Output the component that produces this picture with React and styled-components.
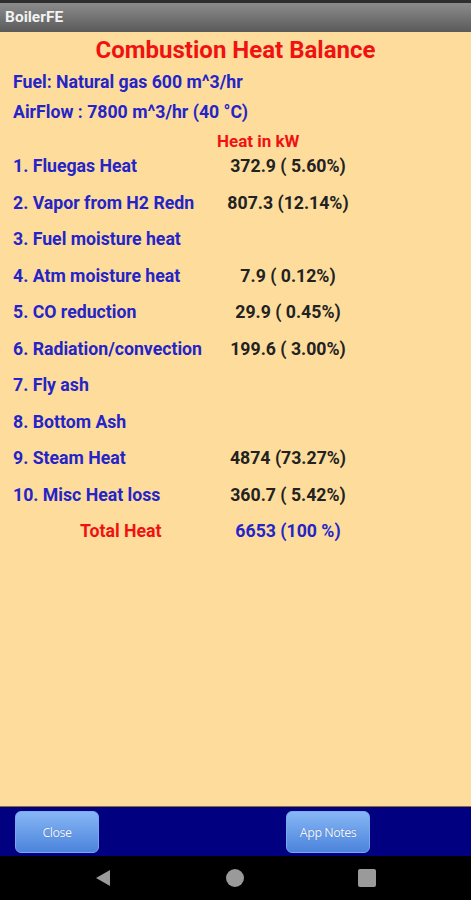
import React from "react";
import styled, { createGlobalStyle } from "styled-components";

const GlobalStyle = createGlobalStyle`
  html, body {
    margin: 0;
    padding: 0;
    background: #000;
  }
  body {
    font-family: Roboto, "Liberation Sans", sans-serif;
  }
`;

const rows = [
  { label: "1. Fluegas Heat", value: "372.9 ( 5.60%)" },
  { label: "2. Vapor from H2 Redn", value: "807.3 (12.14%)" },
  { label: "3. Fuel moisture heat", value: "" },
  { label: "4. Atm moisture heat", value: "7.9 ( 0.12%)" },
  { label: "5. CO reduction", value: "29.9 ( 0.45%)" },
  { label: "6. Radiation/convection", value: "199.6 ( 3.00%)" },
  { label: "7. Fly ash", value: "" },
  { label: "8. Bottom Ash", value: "" },
  { label: "9. Steam Heat", value: "4874 (73.27%)" },
  { label: "10. Misc Heat loss", value: "360.7 ( 5.42%)" },
];

const Screen = styled.div`
  height: 100vh;
  display: flex;
  flex-direction: column;
  overflow: hidden;
`;

const TitleBar = styled.div`
  height: 29px;
  border-top: 3px solid #2e2e2e;
  background: linear-gradient(#8c8c8c, #5a5a5a);
  color: #f2f2f2;
  font-weight: bold;
  font-size: 15.5px;
  line-height: 29px;
  padding-left: 5px;
`;

const Content = styled.div`
  flex: 1;
  background: #fedd9c;
  padding: 5px 0 0 13px;
  border-bottom: 1px solid #8a6a3a;
`;

const Heading = styled.div`
  color: #f01212;
  font-weight: bold;
  font-size: 24px;
  line-height: 26px;
  text-align: center;
  padding-right: 13px;
  margin-bottom: 4px;
`;

const InfoLine = styled.div`
  color: #2424c8;
  font-weight: bold;
  font-size: 17.7px;
  line-height: 30px;
`;

const Table = styled.div`
  display: grid;
  grid-template-columns: 200px 150px;
  grid-auto-rows: 36.5px;
  align-items: center;
`;

const HeadRow = styled.div`
  display: grid;
  grid-template-columns: 200px 150px;
`;

const ColumnHead = styled.div`
  grid-column: 2;
  color: #f01212;
  font-weight: bold;
  font-size: 17px;
  line-height: 14px;
  margin: 7px 0 0 4px;
  white-space: nowrap;
`;

const Label = styled.div`
  color: ${(p) => (p.$total ? "#f01212" : "#2424c8")};
  font-weight: bold;
  font-size: 17.7px;
  padding-left: ${(p) => (p.$total ? "67px" : "0")};
  white-space: nowrap;
`;

const Value = styled.div`
  color: ${(p) => (p.$total ? "#2424c8" : "#222")};
  font-weight: bold;
  font-size: 17.7px;
  text-align: center;
  white-space: pre;
`;

const ButtonBar = styled.div`
  height: 49px;
  background: #000080;
  display: flex;
  align-items: flex-start;
  padding-top: 4px;
  box-sizing: border-box;
`;

const AppButton = styled.button`
  width: 84px;
  height: 42px;
  margin-left: ${(p) => p.$offset}px;
  border: 1px solid #7aa8ee;
  border-radius: 6px;
  background: linear-gradient(#86b6f4, #4c84dc);
  color: #f4f8ff;
  font-family: "Open Sans", sans-serif;
  font-size: 12.5px;
  letter-spacing: -0.5px;
  text-shadow: 0 0 1px #3a66b0;
  padding: 0;
`;

const NavBar = styled.div`
  height: 44px;
  background: #000;
  display: flex;
  align-items: center;
  justify-content: center;
  gap: 113px;
  padding-right: 1px;
`;

export default function App() {
  return (
    <Screen>
      <GlobalStyle />
      <TitleBar>BoilerFE</TitleBar>
      <Content>
        <Heading>Combustion Heat Balance</Heading>
        <InfoLine>Fuel: Natural gas 600 m^3/hr</InfoLine>
        <InfoLine>AirFlow : 7800 m^3/hr (40 °C)</InfoLine>
        <HeadRow>
          <ColumnHead>Heat in kW</ColumnHead>
        </HeadRow>
        <Table>
          {rows.map((r) => (
            <React.Fragment key={r.label}>
              <Label>{r.label}</Label>
              <Value>{r.value}</Value>
            </React.Fragment>
          ))}
          <Label $total>Total Heat</Label>
          <Value $total>6653 (100 %)</Value>
        </Table>
      </Content>
      <ButtonBar>
        <AppButton $offset={15}>Close</AppButton>
        <AppButton $offset={187}>App Notes</AppButton>
      </ButtonBar>
      <NavBar>
        <svg width="18" height="18" viewBox="0 0 18 18">
          <path d="M16 1 L16 17 L2 9 Z" fill="#9a9a9a" />
        </svg>
        <svg width="20" height="20" viewBox="0 0 20 20">
          <circle cx="10" cy="10" r="9" fill="#9a9a9a" />
        </svg>
        <svg width="18" height="18" viewBox="0 0 18 18">
          <rect x="0" y="0" width="18" height="18" rx="2" fill="#9a9a9a" />
        </svg>
      </NavBar>
    </Screen>
  );
}
